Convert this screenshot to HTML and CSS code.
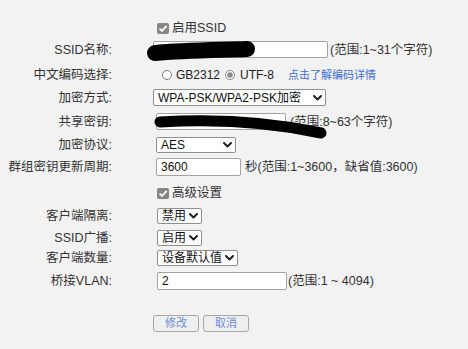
FILE: index.html
```html
<!DOCTYPE html>
<html>
<head>
<meta charset="utf-8">
<link rel="stylesheet" href="styles.css">
</head>
<body>
<div class="page">
  <div class="form">
    <div class="row r1">
      <div class="label"></div>
      <div class="field">
        <span class="cb ml4"><svg width="12" height="11" viewBox="0 0 12 11"><rect x="0" y="0" width="12" height="11" rx="2" fill="#858585"/><path d="M2.6 5.6 L5 8 L9.6 2.8" stroke="#fff" stroke-width="1.8" fill="none"/></svg></span>
        <span class="cbtext">启用SSID</span>
      </div>
    </div>
    <div class="row r2">
      <div class="label">SSID名称:</div>
      <div class="field">
        <span class="input w175"></span>
        <span class="hint g2">(范围:1~31个字符)</span>
      </div>
    </div>
    <div class="row r3">
      <div class="label">中文编码选择:</div>
      <div class="field">
        <span class="radio ml9"><svg width="10" height="10" viewBox="0 0 10 10"><circle cx="5" cy="5" r="4.5" fill="#fff" stroke="#7c7c7c" stroke-width="1"/></svg></span>
        <span class="opt g4">GB2312</span>
        <span class="radio g5"><svg width="10" height="10" viewBox="0 0 10 10"><circle cx="5" cy="5" r="4.5" fill="#fff" stroke="#8a8a8a" stroke-width="1"/><circle cx="5" cy="5" r="2.8" fill="#8a8a8a"/></svg></span>
        <span class="opt g5">UTF-8</span>
        <span class="link">点击了解编码详情</span>
      </div>
    </div>
    <div class="row r4">
      <div class="label">加密方式:</div>
      <div class="field">
        <span class="select w173 h17"><span class="val">WPA-PSK/WPA2-PSK加密</span><svg class="chev" width="9" height="6" viewBox="0 0 9 6"><path d="M1 1 L4.5 4.5 L8 1" stroke="#1a1a1a" stroke-width="1.9" fill="none" stroke-linecap="round" stroke-linejoin="round"/></svg></span>
      </div>
    </div>
    <div class="row r5">
      <div class="label">共享密钥:</div>
      <div class="field">
        <span class="input w130 ml3"></span>
        <span class="hint g4">(范围:8~63个字符)</span>
      </div>
    </div>
    <div class="row r6">
      <div class="label">加密协议:</div>
      <div class="field">
        <span class="select w80 h16 ml3"><span class="val">AES</span><svg class="chev" width="9" height="6" viewBox="0 0 9 6"><path d="M1 1 L4.5 4.5 L8 1" stroke="#1a1a1a" stroke-width="1.9" fill="none" stroke-linecap="round" stroke-linejoin="round"/></svg></span>
      </div>
    </div>
    <div class="row r7">
      <div class="label">群组密钥更新周期:</div>
      <div class="field">
        <span class="input w85 h18 ml3"><span class="val">3600</span></span>
        <span class="hint g4">秒(范围:1~3600，缺省值:3600)</span>
      </div>
    </div>
    <div class="row r8">
      <div class="label"></div>
      <div class="field">
        <span class="cb ml4"><svg width="12" height="11" viewBox="0 0 12 11"><rect x="0" y="0" width="12" height="11" rx="2" fill="#858585"/><path d="M2.6 5.6 L5 8 L9.6 2.8" stroke="#fff" stroke-width="1.8" fill="none"/></svg></span>
        <span class="cbtext">高级设置</span>
      </div>
    </div>
    <div class="row r9">
      <div class="label">客户端隔离:</div>
      <div class="field">
        <span class="select w45 h16 ml4"><span class="val">禁用</span><svg class="chev" width="9" height="6" viewBox="0 0 9 6"><path d="M1 1 L4.5 4.5 L8 1" stroke="#1a1a1a" stroke-width="1.9" fill="none" stroke-linecap="round" stroke-linejoin="round"/></svg></span>
      </div>
    </div>
    <div class="row r10">
      <div class="label">SSID广播:</div>
      <div class="field">
        <span class="select w45 h16 ml4"><span class="val">启用</span><svg class="chev" width="9" height="6" viewBox="0 0 9 6"><path d="M1 1 L4.5 4.5 L8 1" stroke="#1a1a1a" stroke-width="1.9" fill="none" stroke-linecap="round" stroke-linejoin="round"/></svg></span>
      </div>
    </div>
    <div class="row r11">
      <div class="label">客户端数量:</div>
      <div class="field">
        <span class="select w81 h16 ml4"><span class="val">设备默认值</span><svg class="chev" width="9" height="6" viewBox="0 0 9 6"><path d="M1 1 L4.5 4.5 L8 1" stroke="#1a1a1a" stroke-width="1.9" fill="none" stroke-linecap="round" stroke-linejoin="round"/></svg></span>
      </div>
    </div>
    <div class="row r12">
      <div class="label">桥接VLAN:</div>
      <div class="field">
        <span class="input w130 h18 ml4"><span class="val">2</span></span>
        <span class="hint g1">(范围:1 ~ 4094)</span>
      </div>
    </div>
    <div class="buttons">
      <span class="btn">修改</span>
      <span class="btn">取消</span>
    </div>
  </div>
  <svg class="scribble" width="468" height="349" viewBox="0 0 468 349">
    <path d="M155 53 C 185 50, 225 50, 247 49" stroke="#000" stroke-width="16" fill="none" stroke-linecap="round"/>
    <path d="M160 122 C 210 119, 265 121, 321 133" stroke="#000" stroke-width="11" fill="none" stroke-linecap="round"/>
  </svg>
</div>
</body>
</html>
```
FILE: styles.css
```css
html, body {
  margin: 0;
  padding: 0;
  background: #f2f2f2;
}
.page {
  position: relative;
  width: 468px;
  height: 349px;
  overflow: hidden;
  font-family: "Liberation Sans", "Noto Sans CJK SC", sans-serif;
  color: #333;
}
.form {
  padding-top: 17px;
  display: flex;
  flex-direction: column;
}
.row {
  display: grid;
  grid-template-columns: 112px 1fr;
  column-gap: 41px;
  align-items: center;
}
.r1 { height: 22px; }
.r2 { height: 21px; }
.r3 { height: 29px; }
.r4 { height: 17px; }
.r5 { height: 31px; }
.r6 { height: 16px; }
.r7 { height: 28px; }
.r8 { height: 24px; }
.r9 { height: 21px; }
.r10 { height: 24px; }
.r11 { height: 16px; }
.r12 { height: 30px; }
.label {
  text-align: right;
  font-size: 12.5px;
  line-height: 16px;
  color: #333;
  white-space: nowrap;
}
.field {
  display: flex;
  align-items: center;
  white-space: nowrap;
}
.ml3 { margin-left: 3px; }
.ml4 { margin-left: 4px; }
.ml9 { margin-left: 9px; }
.g1 { margin-left: 1px; }
.g2 { margin-left: 2px; }
.g4 { margin-left: 4px; }
.g5 { margin-left: 5px; }
.cb, .radio {
  display: flex;
}
.cbtext {
  margin-left: 3px;
  font-size: 12.5px;
  line-height: 16px;
  color: #333;
}
.opt {
  font-size: 12px;
  line-height: 16px;
  color: #222;
}
.link {
  margin-left: 14px;
  font-size: 11px;
  line-height: 16px;
  color: #3f6fd3;
}
.hint {
  font-size: 12.5px;
  line-height: 16px;
  color: #333;
}
.input, .select {
  box-sizing: border-box;
  display: flex;
  align-items: center;
  background: #fff;
  border: 1px solid #8f8f8f;
  border-radius: 2px;
  height: 17px;
  font-size: 12px;
  color: #111;
}
.input { border-color: #a3a3a3; }
.h16 { height: 16px; }
.h17 { height: 17px; }
.h18 { height: 18px; }
.w45 { width: 45px; }
.w80 { width: 80px; }
.w81 { width: 81px; }
.w85 { width: 85px; }
.w130 { width: 130px; }
.w173 { width: 173px; }
.w175 { width: 175px; }
.val {
  padding-left: 4px;
  line-height: 14px;
  flex: 1;
  overflow: hidden;
}
.select .chev {
  margin-right: 3px;
  flex: none;
}
.buttons {
  margin-top: 19px;
  margin-left: 153px;
  display: flex;
  gap: 4px;
}
.btn {
  box-sizing: border-box;
  width: 46px;
  height: 17px;
  border: 1px solid #a6a6a6;
  border-radius: 3px;
  background: #efefef;
  color: #6a8ed3;
  font-size: 11px;
  line-height: 15px;
  text-align: center;
}
.scribble {
  position: absolute;
  top: 0;
  left: 0;
  pointer-events: none;
}
```
